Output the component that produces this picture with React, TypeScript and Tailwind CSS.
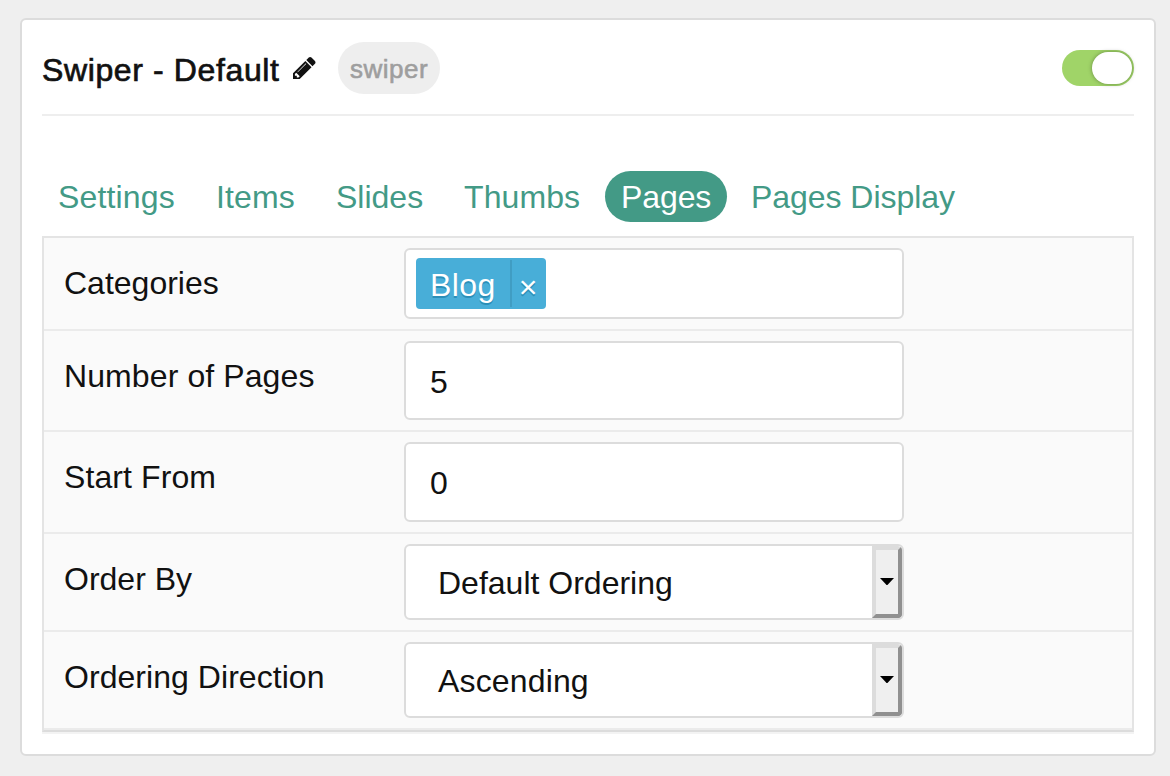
import type { ReactNode } from "react";

const tabs = [
  { label: "Settings", width: "w-[150px]", spacing: "tracking-[0.15px]" },
  { label: "Items", width: "w-[112px]", spacing: "tracking-[0.1px]" },
  { label: "Slides", width: "w-[120px]", spacing: "tracking-[0px]" },
  { label: "Thumbs", width: "w-[149px]", spacing: "tracking-[0.1px]" },
  { label: "Pages", width: "w-[122px]", spacing: "tracking-[-0.1px]", active: true },
  { label: "Pages Display", width: "w-[236px]", spacing: "tracking-[-0.05px]" },
];

function Row({ label, spacing, children }: { label: string; spacing: string; children: ReactNode }) {
  return (
    <div className="flex border-b-2 border-[#ebebeb] py-2.5 pl-5">
      <div className={`w-[340px] pt-2.5 leading-[50px] ${spacing}`}>{label}</div>
      {children}
    </div>
  );
}

function TextField({ value, size }: { value: string; size: string }) {
  return (
    <div className={`flex w-[500px] items-center rounded-md border-2 border-[#dcdcdc] bg-white pl-6 pt-0.5 ${size}`}>
      {value}
    </div>
  );
}

function SelectField({ value, spacing }: { value: string; spacing: string }) {
  return (
    <div className="flex h-[76px] w-[500px] overflow-hidden rounded-md border-2 border-[#dcdcdc] bg-white">
      <span className={`flex flex-1 items-center pl-8 pt-0.5 ${spacing}`}>{value}</span>
      <span className="flex w-[30px] items-center justify-center rounded-r border-4 border-b-[#909090] border-l-[#dcdcdc] border-r-[#909090] border-t-[#dcdcdc] bg-[#efefef] pb-px">
        <svg className="h-[7px] w-3.5 shrink-0" viewBox="0 0 14 7">
          <path d="M0 0h14L7 7.5z" fill="#000" />
        </svg>
      </span>
    </div>
  );
}

export default function App() {
  return (
    <div className="h-[776px] w-[1170px] bg-[#efefef] pl-5 pt-[18px] font-['Liberation_Sans',sans-serif] text-[32px] text-[#111]">
      <div className="h-[738px] w-[1136px] rounded-md border-2 border-[#dcdcdc] bg-white px-5">
        <div className="flex h-24 items-center border-b-2 border-[#eee] pt-0.5">
          <h1 className="w-[251px] whitespace-nowrap pt-1 tracking-[0.62px] [-webkit-text-stroke:0.7px_#111]">Swiper - Default</h1>
          <svg className="size-[22.5px]" viewBox="0 149 1515 1515" fill="#111">
            <path d="M363 1536l91-91-235-235-91 91v107h128v128h107zM886 608q0-22-22-22-10 0-17 7l-542 542q-7 7-7 17 0 22 22 22 10 0 17-7l542-542q7-7 7-17zM832 416l416 416-832 832H0v-416zM1515 512q0 53-37 90l-166 166-416-416 166-165q36-38 90-38 53 0 91 38l235 234q37 39 37 91z" />
          </svg>
          <span className="ml-[22.5px] flex h-[52px] w-[102px] items-center justify-center rounded-full bg-[#eee] pt-0.5 text-[26px] tracking-[0.5px] text-[#9e9e9e] [-webkit-text-stroke:0.6px_#9e9e9e]">
            swiper
          </span>
          <span className="ml-auto flex h-9 w-[72px] justify-end rounded-full bg-[#a0d468] p-0.5">
            <span className="h-8 w-10 rounded-full bg-white shadow-[0_0_4px_rgba(0,0,0,0.35)]" />
          </span>
        </div>

        <div className="flex gap-2 pb-3.5 pt-[55px]">
          {tabs.map((tab) => (
            <div
              key={tab.label}
              className={`h-[51px] whitespace-nowrap rounded-full pl-4 leading-[53px] ${tab.width} ${tab.spacing} ${tab.active ? "bg-[#439a86] text-white" : "text-[#439a86]"}`}
            >
              {tab.label}
            </div>
          ))}
        </div>

        <div className="border-2 border-[#e4e4e4] border-b-[#dcdcdc] bg-[#fafafa] shadow-[0_2px_0_#f3f3f3]">
          <Row label="Categories" spacing="tracking-[0px]">
            <div className="flex h-[71px] w-[500px] items-start rounded-md border-2 border-[#dcdcdc] bg-white pl-2.5 pt-2">
              <span className="flex h-[51px] w-[130px] items-center rounded bg-[#48aed8] py-0.5 text-white [text-shadow:0_2px_0_#2b8fb8]">
                <span className="w-[94px] pl-3.5 pt-[3px] tracking-[0.4px]">Blog</span>
                <span className="flex h-full flex-1 items-center justify-center border-l-2 border-[#409dc3] pr-0.5 pt-1.5">×</span>
              </span>
            </div>
          </Row>
          <Row label="Number of Pages" spacing="tracking-[0.1px]">
            <TextField value="5" size="h-[79px]" />
          </Row>
          <Row label="Start From" spacing="tracking-[0.1px]">
            <TextField value="0" size="h-20" />
          </Row>
          <Row label="Order By" spacing="tracking-[0px]">
            <SelectField value="Default Ordering" spacing="tracking-[0px]" />
          </Row>
          <Row label="Ordering Direction" spacing="tracking-[0.05px]">
            <SelectField value="Ascending" spacing="tracking-[0.15px]" />
          </Row>
        </div>
      </div>
    </div>
  );
}
